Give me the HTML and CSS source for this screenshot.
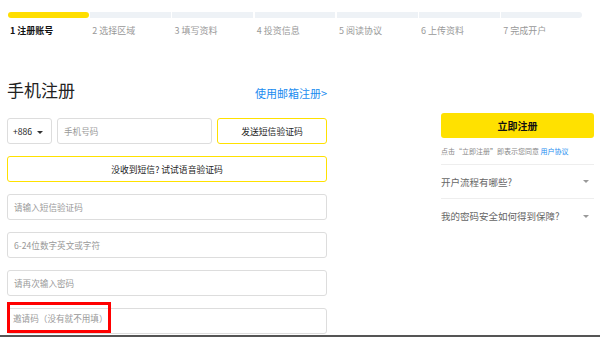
FILE: index.html
```html
<!DOCTYPE html>
<html lang="zh-CN">
<head>
	<meta charset="UTF-8">
	<title>手机注册</title>
	<link rel="stylesheet" href="styles.css">
</head>
<body>
<div class="steps">
	<div class="step active"><i></i><span>1 注册账号</span></div>
	<div class="step"><i></i><span>2 选择区域</span></div>
	<div class="step"><i></i><span>3 填写资料</span></div>
	<div class="step"><i></i><span>4 投资信息</span></div>
	<div class="step"><i></i><span>5 阅读协议</span></div>
	<div class="step"><i></i><span>6 上传资料</span></div>
	<div class="step"><i></i><span>7 完成开户</span></div>
</div>

<div class="main">
	<div class="form">
		<div class="title-row">
			<h1>手机注册</h1>
			<a class="switch" href="#">使用邮箱注册&gt;</a>
		</div>
		<div class="row">
			<div class="box code">+886 <b class="caret"></b></div>
			<div class="box phone">手机号码</div>
			<button class="btn-line send">发送短信验证码</button>
		</div>
		<button class="btn-line voice">没收到短信? 试试语音验证码</button>
		<div class="box field">请输入短信验证码</div>
		<div class="box field">6-24位数字英文或字符</div>
		<div class="box field">请再次输入密码</div>
		<div class="box field invite"><span class="mark">邀请码（没有就不用填）</span></div>
	</div>

	<div class="side">
		<button class="btn-main">立即注册</button>
		<p class="agree">点击“立即注册”即表示您同意 <a href="#">用户协议</a></p>
		<div class="faq">开户流程有哪些?<b class="caret"></b></div>
		<div class="faq">我的密码安全如何得到保障?<b class="caret"></b></div>
	</div>
</div>
<div class="bottom-line"></div>
</body>
</html>
```

FILE: styles.css
```css
*{margin:0;padding:0;box-sizing:border-box;}
html,body{height:100%;}
body{
	font-family:"Noto Sans CJK SC","Liberation Sans",sans-serif;
	color:#222;
	background:#fff;
	position:relative;
	overflow:hidden;
}
a{text-decoration:none;color:#1a8cf0;}
button{font-family:inherit;cursor:pointer;}

/* 顶部步骤条 */
.steps{
	display:flex;
	gap:1.5px;
	width:574px;
	margin:12px 0 0 8px;
}
.step{flex:1;}
.step i{
	display:block;
	height:6px;
	background:#eef2f6;
}
.step:first-child i{border-radius:3px 0 0 3px;}
.step:last-child i{border-radius:0 3px 3px 0;}
.step.active i{background:#ffde00;border-radius:3px;}
.step span{
	display:block;
	margin:6px 0 0 2px;
	font-size:9px;
	line-height:14px;
	color:#999;
}
.step.active span{color:#111;font-weight:bold;}

.main{
	display:flex;
	justify-content:space-between;
	padding:0 6px 0 7px;
}
.form{width:320px;}

.title-row{
	display:flex;
	justify-content:space-between;
	align-items:flex-end;
	margin-top:40px;
}
.title-row h1{
	font-size:17px;
	font-weight:normal;
	line-height:24px;
	margin-left:0;
}
.switch{font-size:11px;line-height:16px;margin-bottom:1px;}

.row{
	display:flex;
	gap:5px;
	margin-top:16px;
}
.box{
	height:26px;
	border:1px solid #ddd;
	border-radius:3px;
	font-size:8.6px;
	line-height:24px;
	padding-left:6px;
	color:#999;
}
.code{width:45px;padding-left:5px;color:#222;}
.phone{width:155px;}
.caret{
	display:inline-block;
	width:0;height:0;
	border-left:3px solid transparent;
	border-right:3px solid transparent;
	border-top:3.5px solid #333;
	vertical-align:middle;
	margin-left:3px;
}
.btn-line{
	height:26px;
	border:1px solid #ffe100;
	border-radius:3px;
	background:#fff;
	font-size:8.8px;
	color:#222;
}
.send{flex:1;}
.voice{width:320px;margin-top:12px;display:block;}

.field{margin-top:12px;}
.invite{position:relative;}
.mark{
	position:absolute;
	left:-1px;top:-7px;
	width:104px;height:31px;
	border:3px solid #f00;
	padding-left:3px;
	line-height:27px;
	white-space:nowrap;
}

/* 右侧 */
.side{width:153px;padding-top:75px;}
.btn-main{
	display:block;
	width:100%;
	height:25px;
	border:0;
	border-radius:3px;
	background:#ffe100;
	font-size:10px;
	font-weight:bold;
	color:#111;
}
.agree{
	font-size:7px;
	color:#888;
	margin-top:8px;
	line-height:10px;
	padding-bottom:8px;
	border-bottom:1px solid #eee;
	white-space:nowrap;
}
.faq{
	display:flex;
	justify-content:space-between;
	align-items:center;
	height:34px;
	font-size:9.5px;
	color:#666;
	border-bottom:1px solid #eee;
}
.faq:last-child{border-bottom:0;}
.faq .caret{border-top-color:#999;margin-right:5px;}

.bottom-line{
	position:absolute;
	left:0;right:0;bottom:0;
	height:2px;
	background:#555;
}
```
